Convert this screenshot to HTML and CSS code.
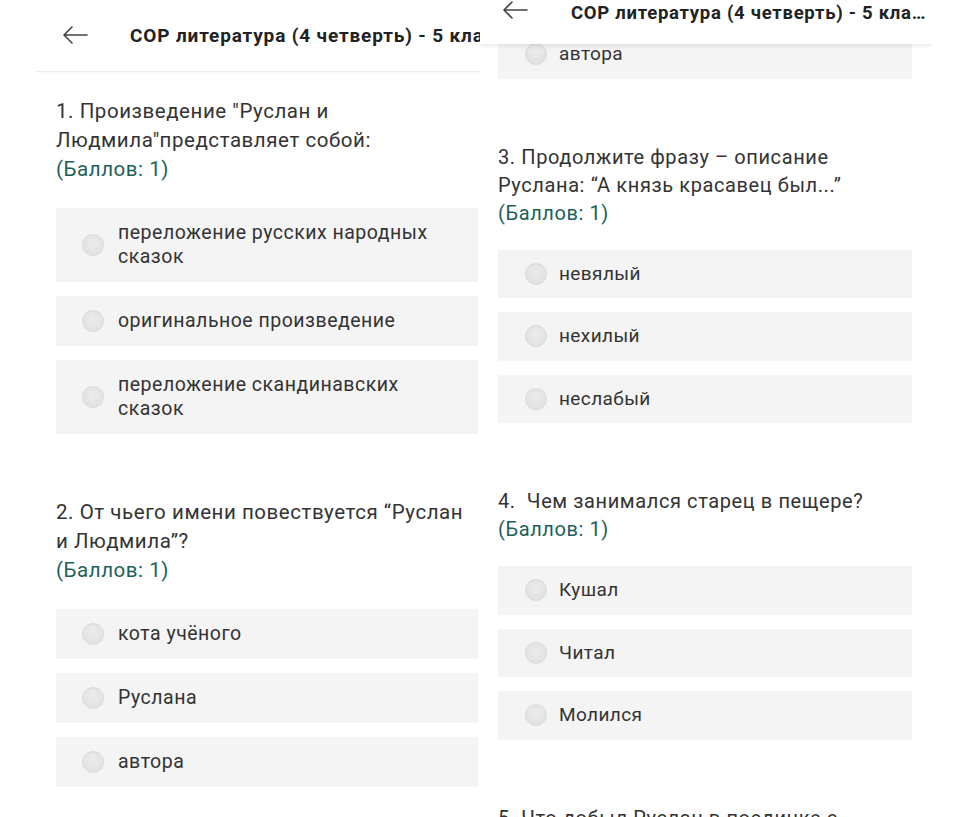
FILE: index.html
```html
<!DOCTYPE html>
<html lang="ru">
<head>
<meta charset="utf-8">
<title>СОР литература</title>
<link rel="stylesheet" href="styles.css">
</head>
<body>
<div class="screens">
  <section class="screen screen-left">
    <header class="bar bar-left">
      <svg class="back" width="26" height="18" viewBox="0 0 26 18"><path d="M25 9H2M10 1L2 9l8 8" fill="none" stroke="#444" stroke-width="1.6" stroke-linecap="round" stroke-linejoin="round"/></svg>
      <h1 class="title title-cut">СОР литература (4 четверть) - 5 класс</h1>
    </header>
    <div class="content content-left">
      <div class="question">
        <p class="q-text">1. Произведение "Руслан и<br>Людмила"представляет собой:<span class="points">(Баллов: 1)</span></p>
        <ul class="options">
          <li class="option"><span class="radio"></span><span class="label">переложение русских народных сказок</span></li>
          <li class="option"><span class="radio"></span><span class="label">оригинальное произведение</span></li>
          <li class="option"><span class="radio"></span><span class="label">переложение скандинавских сказок</span></li>
        </ul>
      </div>
      <div class="question">
        <p class="q-text">2. От чьего имени повествуется “Руслан<br>и Людмила”?<span class="points">(Баллов: 1)</span></p>
        <ul class="options">
          <li class="option"><span class="radio"></span><span class="label">кота учёного</span></li>
          <li class="option"><span class="radio"></span><span class="label">Руслана</span></li>
          <li class="option"><span class="radio"></span><span class="label">автора</span></li>
        </ul>
      </div>
    </div>
  </section>
  <section class="screen screen-right">
    <header class="bar bar-right">
      <svg class="back" width="26" height="18" viewBox="0 0 26 18"><path d="M25 9H2M10 1L2 9l8 8" fill="none" stroke="#444" stroke-width="1.6" stroke-linecap="round" stroke-linejoin="round"/></svg>
      <h1 class="title title-ellipsis">СОР литература (4 четверть) - 5 класс</h1>
    </header>
    <div class="content content-right">
      <ul class="options options-first">
        <li class="option"><span class="radio"></span><span class="label">автора</span></li>
      </ul>
      <div class="question">
        <p class="q-text">3. Продолжите фразу – описание<br>Руслана: “А князь красавец был...”<span class="points">(Баллов: 1)</span></p>
        <ul class="options">
          <li class="option"><span class="radio"></span><span class="label">невялый</span></li>
          <li class="option"><span class="radio"></span><span class="label">нехилый</span></li>
          <li class="option"><span class="radio"></span><span class="label">неслабый</span></li>
        </ul>
      </div>
      <div class="question">
        <p class="q-text">4.&nbsp; Чем занимался старец в пещере?<span class="points">(Баллов: 1)</span></p>
        <ul class="options">
          <li class="option"><span class="radio"></span><span class="label">Кушал</span></li>
          <li class="option"><span class="radio"></span><span class="label">Читал</span></li>
          <li class="option"><span class="radio"></span><span class="label">Молился</span></li>
        </ul>
      </div>
      <div class="question">
        <p class="q-text">5. Что добыл Руслан в поединке с<br>Рогдаем?<span class="points">(Баллов: 1)</span></p>
      </div>
    </div>
  </section>
</div>
</body>
</html>
```
FILE: styles.css
```css
* { box-sizing: border-box; }
html, body { margin: 0; padding: 0; background: #fff; }
body {
  font-family: Roboto, "Noto Sans", "Liberation Sans", sans-serif;
  color: #333;
  width: 972px;
  height: 817px;
  overflow: hidden;
}
.screens {
  display: flex;
  height: 817px;
  padding-left: 36px;
}
.screen {
  position: relative;
  height: 817px;
  overflow: hidden;
  background: #fff;
}
.screen-left { width: 444px; }
.screen-right { width: 452px; }

.bar {
  display: flex;
  background: #fff;
}
.bar-left {
  height: 72px;
  align-items: center;
  padding-left: 26px;
  border-bottom: 1px solid #ededed;
  box-shadow: 0 1px 2px rgba(0,0,0,0.03);
}
.bar-right {
  position: absolute;
  top: 0;
  left: 0;
  right: 0;
  height: 44px;
  align-items: flex-start;
  padding: 0 4px 0 22px;
  z-index: 2;
  box-shadow: 0 2px 4px rgba(0,0,0,0.09);
}
.back { flex-shrink: 0; display: block; }
.bar-left .back { margin-top: -2px; }
.bar-right .back { margin-top: 1px; }
.title {
  margin: 0 0 0 43px;
  font-size: 19px;
  letter-spacing: 0.85px;
  font-weight: 700;
  color: #222;
  white-space: nowrap;
  overflow: hidden;
  line-height: 26px;
}
.bar-left .title { margin-left: 42px; }
.title-ellipsis {
  text-overflow: ellipsis;
  font-size: 18.5px;
  letter-spacing: 0.72px;
  min-width: 0;
  flex: 1;
  margin-left: 43px;
}

.content-left { padding: 25px 2px 0 20px; }
.content-right { padding: 30px 20px 0 18px; }

.question + .question, .options-first + .question { margin-top: 64px; }
.q-text {
  margin: 0;
  font-size: 20.5px;
  letter-spacing: 0.55px;
  line-height: 29px;
  color: #333;
}
.content-right .q-text { line-height: 28px; font-size: 20px; letter-spacing: 0.6px; }
.points {
  display: block;
  color: #1d5f5a;
}
.options {
  list-style: none;
  margin: 24px 0 0;
  padding: 0;
  display: flex;
  flex-direction: column;
  gap: 14px;
}
.content-right .options { margin-top: 23px; }
.content-right .options-first { margin-top: 0; }
.option {
  display: flex;
  align-items: center;
  background: #f4f4f4;
  padding: 13px 16px 13px 26px;
  font-size: 19.5px;
  letter-spacing: 0.5px;
  line-height: 24px;
  color: #333;
}
.content-right .option { padding: 12px 16px 12.5px 27px; font-size: 19px; letter-spacing: 0.4px; }
.radio {
  flex-shrink: 0;
  width: 22px;
  height: 22px;
  border-radius: 50%;
  background: radial-gradient(circle at 50% 40%, #ebebeb, #dedede);
  border: 1px solid #dadada;
  margin-right: 14px;
}
.content-right .radio { margin-right: 12px; }
```
